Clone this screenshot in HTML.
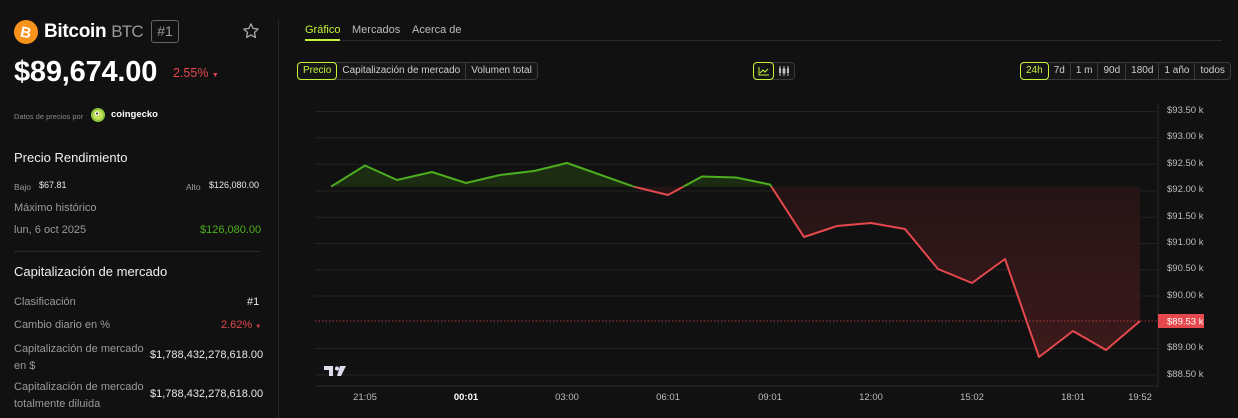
<!DOCTYPE html>
<html><head><meta charset="utf-8"><style>
*{margin:0;padding:0;box-sizing:border-box}
body{width:1238px;height:418px;background:#111111;color:#e8e8e8;font-family:"Liberation Sans",sans-serif;position:relative;overflow:hidden}
.a{position:absolute;white-space:nowrap}
.g{color:#9a9a9a}
.btn{position:absolute;height:18px;border:1px solid #3a3a3a;border-radius:4px;display:flex;font-size:10px;color:#cfcfcf;background:#161616}
.btn span{padding:0 5px;line-height:16px;border-right:1px solid #3a3a3a}
.btn span:last-child{border-right:none}
.btn .on{border:1px solid #c7f23a;border-radius:4px;color:#c7f23a;margin:-1px 0 -1px -1px}
.yl{position:absolute;left:1167px;font-size:9.5px;color:#bdbdbd}
.xl{position:absolute;top:392px;font-size:9.5px;color:#bdbdbd;transform:translateX(-50%)}
</style></head><body>
<!-- left panel -->
<svg class="a" style="left:14px;top:20px" width="24" height="24" viewBox="0 0 24 24"><circle cx="12" cy="12" r="12" fill="#f7931a"/><text x="12" y="17.5" text-anchor="middle" font-family="Liberation Sans" font-weight="bold" font-size="15" fill="#fff" transform="rotate(12 12 12)">B</text></svg>
<div class="a" style="left:44px;top:21px;font-size:19px;font-weight:bold;color:#fff;letter-spacing:-0.3px">Bitcoin <span style="font-weight:normal;color:#9a9a9a;font-size:17px;letter-spacing:-0.8px">BTC</span></div>
<div class="a" style="left:151px;top:20px;width:28px;height:23px;border:1px solid #666;border-radius:3px;font-size:14px;color:#9a9a9a;text-align:center;line-height:21px">#1</div>
<svg class="a" style="left:242px;top:22px" width="18" height="18" viewBox="0 0 24 24"><path d="M12 2.5l2.9 6.1 6.6.8-4.9 4.6 1.3 6.6L12 17.3 6.1 20.6l1.3-6.6L2.5 9.4l6.6-.8z" fill="none" stroke="#aaa" stroke-width="1.7" stroke-linejoin="round"/></svg>
<div class="a" style="left:14px;top:56px;font-size:29px;font-weight:bold;color:#fff;letter-spacing:-0.2px">$89,674.00</div>
<div class="a" style="left:173px;top:66px;font-size:12.5px;color:#e5484d">2.55% <span style="font-size:7px">▼</span></div>
<div class="a g" style="left:14px;top:112px;font-size:7.5px;color:#8a8a8a">Datos de precios por</div>
<svg class="a" style="left:91px;top:108px" width="14" height="14" viewBox="0 0 14 14"><circle cx="7" cy="7" r="7" fill="#8dc63f"/><circle cx="7" cy="7" r="5" fill="#c4e25a"/><circle cx="6" cy="5.5" r="2" fill="#fff"/><circle cx="6" cy="5.5" r="1" fill="#222"/></svg>
<div class="a" style="left:111px;top:109px;font-size:9.5px;font-weight:bold;color:#fff">coingecko</div>

<div class="a" style="left:14px;top:150px;font-size:13px;color:#f0f0f0">Precio Rendimiento</div>
<div class="a g" style="left:14px;top:182px;font-size:8.5px">Bajo</div>
<div class="a" style="left:39px;top:180px;font-size:9px">$67.81</div>
<div class="a g" style="left:186px;top:182px;font-size:8.5px">Alto</div>
<div class="a" style="left:209px;top:180px;font-size:9px">$126,080.00</div>
<div class="a g" style="left:14px;top:202px;font-size:11px">Máximo histórico</div>
<div class="a g" style="left:14px;top:224px;font-size:11px">lun, 6 oct 2025</div>
<div class="a" style="left:200px;top:224px;font-size:11px;color:#4cae1f">$126,080.00</div>
<div class="a" style="left:14px;top:251px;width:246px;height:1px;background:#2a2a2a"></div>
<div class="a" style="left:14px;top:264px;font-size:13px;color:#f0f0f0">Capitalización de mercado</div>
<div class="a g" style="left:14px;top:296px;font-size:11px">Clasificación</div>
<div class="a" style="left:247px;top:296px;font-size:11px">#1</div>
<div class="a g" style="left:14px;top:319px;font-size:11px">Cambio diario en %</div>
<div class="a" style="left:221px;top:319px;font-size:11px;color:#e5484d">2.62% <span style="font-size:6px">▼</span></div>
<div class="a g" style="left:14px;top:341px;font-size:11px;line-height:17px">Capitalización de mercado<br>en $</div>
<div class="a" style="left:150px;top:349px;font-size:11px">$1,788,432,278,618.00</div>
<div class="a g" style="left:14px;top:379px;font-size:11px;line-height:17px">Capitalización de mercado<br>totalmente diluida</div>
<div class="a" style="left:150px;top:388px;font-size:11px">$1,788,432,278,618.00</div>
<div class="a" style="left:278px;top:19px;width:1px;height:399px;background:#262626"></div>

<!-- tabs -->
<div class="a" style="left:305px;top:24px;font-size:11px;color:#c7f23a">Gráfico</div>
<div class="a g" style="left:352px;top:24px;font-size:11px;color:#bbb">Mercados</div>
<div class="a g" style="left:412px;top:24px;font-size:11px;color:#bbb">Acerca de</div>
<div class="a" style="left:305px;top:40px;width:917px;height:1px;background:#2a2a2a"></div>
<div class="a" style="left:305px;top:39px;width:35px;height:2px;background:#c7f23a"></div>

<div class="btn" style="left:297px;top:62px"><span class="on">Precio</span><span>Capitalización de mercado</span><span>Volumen total</span></div>
<div class="btn" style="left:753px;top:62px;width:42px"><span class="on" style="width:21px;padding:0;display:flex;align-items:center;justify-content:center"><svg width="11" height="9" viewBox="0 0 11 9"><path d="M1 0v8h10M2 6l3-3 2 2 3-3" fill="none" stroke="#c7f23a" stroke-width="1"/></svg></span><span style="padding:0;width:20px;display:flex;align-items:center;justify-content:center"><svg width="12" height="10" viewBox="0 0 12 10"><path d="M2 0v10M6 0v10M10 0v10" stroke="#bbb"/><rect x="1" y="2" width="2" height="5" fill="#bbb"/><rect x="5" y="3" width="2" height="4" fill="none" stroke="#bbb"/><rect x="9" y="2" width="2" height="5" fill="#bbb"/></svg></span></div>
<div class="btn" style="left:1020px;top:62px"><span class="on">24h</span><span>7d</span><span>1 m</span><span>90d</span><span>180d</span><span>1 año</span><span>todos</span></div>

<!-- chart -->
<svg class="a" style="left:0;top:0" width="1238" height="418">
<defs>
<clipPath id="up"><rect x="300" y="0" width="900" height="186.7"/></clipPath>
<clipPath id="dn"><rect x="300" y="186.7" width="900" height="300"/></clipPath>
<linearGradient id="gg" x1="0" y1="0" x2="0" y2="1"><stop offset="0" stop-color="#1c2e12"/><stop offset="1" stop-color="#141a10"/></linearGradient>
<linearGradient id="rg" x1="0" y1="0" x2="0" y2="1"><stop offset="0" stop-color="#211314"/><stop offset="1" stop-color="#3d1a1c"/></linearGradient>
</defs>
<g stroke="#232323" stroke-width="1">
<line x1="315" x2="1158" y1="111.5" y2="111.5"/><line x1="315" x2="1158" y1="137.8" y2="137.8"/><line x1="315" x2="1158" y1="164.3" y2="164.3"/><line x1="315" x2="1158" y1="191" y2="191"/><line x1="315" x2="1158" y1="217.3" y2="217.3"/><line x1="315" x2="1158" y1="243.5" y2="243.5"/><line x1="315" x2="1158" y1="269.8" y2="269.8"/><line x1="315" x2="1158" y1="296" y2="296"/><line x1="315" x2="1158" y1="348.5" y2="348.5"/><line x1="315" x2="1158" y1="375" y2="375"/>
<line x1="315" x2="1158" y1="386" y2="386" stroke="#2a2a2a"/><line x1="1158" x2="1158" y1="104" y2="387" stroke="#2a2a2a"/>
</g>
<polygon clip-path="url(#up)" fill="url(#gg)" points="331,186.7 365,165.5 397,180 432,172 466,183 500,175 534,171 567,163 634,186.7 668,195 702,176.5 736,177.5 770,184.5 804,237 837,226 871,223 905,229 938,269 972,283 1005,259 1039,357 1073,331 1106,350 1140,321 1140,186.7"/>
<polygon clip-path="url(#dn)" fill="url(#rg)" points="331,186.7 365,165.5 397,180 432,172 466,183 500,175 534,171 567,163 634,186.7 668,195 702,176.5 736,177.5 770,184.5 804,237 837,226 871,223 905,229 938,269 972,283 1005,259 1039,357 1073,331 1106,350 1140,321 1140,186.7"/>
<line x1="315" x2="1158" y1="321" y2="321" stroke="#e5484d" stroke-width="1" stroke-dasharray="1.5 2" opacity=".7"/>
<polyline clip-path="url(#up)" fill="none" stroke="#4cae1f" stroke-width="2" stroke-linejoin="round" points="331,186.7 365,165.5 397,180 432,172 466,183 500,175 534,171 567,163 634,186.7 668,195 702,176.5 736,177.5 770,184.5 804,237 837,226 871,223 905,229 938,269 972,283 1005,259 1039,357 1073,331 1106,350 1140,321"/>
<polyline clip-path="url(#dn)" fill="none" stroke="#e5484d" stroke-width="2" stroke-linejoin="round" points="331,186.7 365,165.5 397,180 432,172 466,183 500,175 534,171 567,163 634,186.7 668,195 702,176.5 736,177.5 770,184.5 804,237 837,226 871,223 905,229 938,269 972,283 1005,259 1039,357 1073,331 1106,350 1140,321"/>
<rect x="1158" y="314" width="46" height="14" fill="#e5484d"/>
<text x="1167" y="324.5" font-family="Liberation Sans" font-size="9.5" fill="#fff">$89.53 k</text>
<path d="M324 366h9v10h-4v-6h-5z" fill="#dde"/><circle cx="337" cy="368.5" r="2" fill="#dde"/><path d="M340 366h6l-5 10h-4z" fill="#dde"/>
</svg>
<div class="yl" style="top:105px">$93.50 k</div>
<div class="yl" style="top:131px">$93.00 k</div>
<div class="yl" style="top:158px">$92.50 k</div>
<div class="yl" style="top:184px">$92.00 k</div>
<div class="yl" style="top:211px">$91.50 k</div>
<div class="yl" style="top:237px">$91.00 k</div>
<div class="yl" style="top:263px">$90.50 k</div>
<div class="yl" style="top:290px">$90.00 k</div>
<div class="yl" style="top:342px">$89.00 k</div>
<div class="yl" style="top:369px">$88.50 k</div>
<div class="xl" style="left:365px">21:05</div>
<div class="xl" style="left:466px;color:#fff;font-weight:bold">00:01</div>
<div class="xl" style="left:567px">03:00</div>
<div class="xl" style="left:668px">06:01</div>
<div class="xl" style="left:770px">09:01</div>
<div class="xl" style="left:871px">12:00</div>
<div class="xl" style="left:972px">15:02</div>
<div class="xl" style="left:1073px">18:01</div>
<div class="xl" style="left:1140px">19:52</div>
</body></html>
